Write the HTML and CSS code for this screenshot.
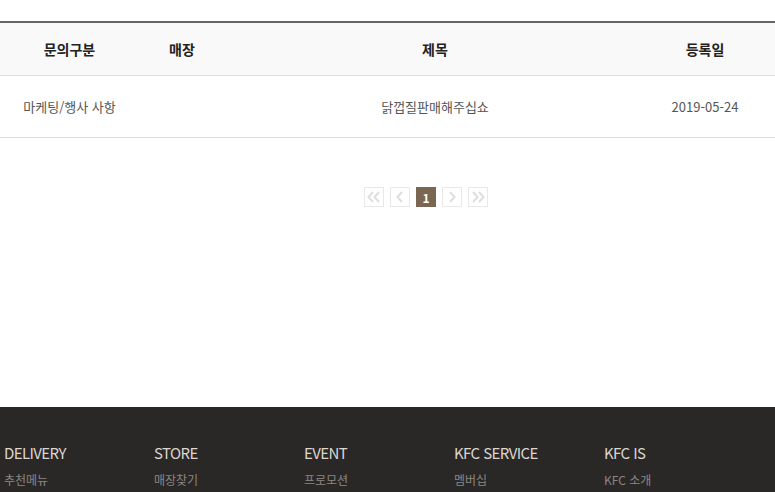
FILE: index.html
```html
<!DOCTYPE html>
<html lang="ko">
<head>
<meta charset="utf-8">
<link rel="stylesheet" href="styles.css">
</head>
<body>
<div class="page">
  <div class="board">
    <div class="row head">
      <div class="c1">문의구분</div>
      <div class="c2">매장</div>
      <div class="c3">제목</div>
      <div class="c4">등록일</div>
    </div>
    <div class="row body">
      <div class="c1">마케팅/행사 사항</div>
      <div class="c2"></div>
      <div class="c3">닭껍질판매해주십쇼</div>
      <div class="c4">2019-05-24</div>
    </div>
  </div>
  <div class="paging">
    <a class="pg"><svg width="14" height="12" viewBox="0 0 14 12"><path d="M6 1 1.5 6 6 11M12 1 7.5 6 12 11" fill="none" stroke="#dedede" stroke-width="2"/></svg></a>
    <a class="pg"><svg width="8" height="12" viewBox="0 0 8 12"><path d="M6 1 1.5 6 6 11" fill="none" stroke="#dedede" stroke-width="2"/></svg></a>
    <a class="pg on">1</a>
    <a class="pg"><svg width="8" height="12" viewBox="0 0 8 12"><path d="M2 1 6.5 6 2 11" fill="none" stroke="#dedede" stroke-width="2"/></svg></a>
    <a class="pg"><svg width="14" height="12" viewBox="0 0 14 12"><path d="M2 1 6.5 6 2 11M8 1 12.5 6 8 11" fill="none" stroke="#dedede" stroke-width="2"/></svg></a>
  </div>
</div>
<footer class="foot">
  <div class="fcol"><h3>DELIVERY</h3><p>추천메뉴</p></div>
  <div class="fcol"><h3>STORE</h3><p>매장찾기</p></div>
  <div class="fcol"><h3>EVENT</h3><p>프로모션</p></div>
  <div class="fcol"><h3>KFC SERVICE</h3><p>멤버십</p></div>
  <div class="fcol"><h3>KFC IS</h3><p>KFC 소개</p></div>
</footer>
</body>
</html>
```
FILE: styles.css
```css
html, body {
  margin: 0;
  padding: 0;
  overflow: hidden;
  background: #fff;
  font-family: "Noto Sans CJK KR", "Noto Sans", sans-serif;
}
.page {
  height: 407px;
  padding-top: 21px;
  box-sizing: border-box;
}
.board {
  border-top: 2px solid #666;
}
.row {
  display: grid;
  grid-template-columns: 139px 86px 420px 120px 1fr;
  align-items: center;
  text-align: center;
}
.head {
  height: 52px;
  background: #f9f9f9;
  border-bottom: 1px solid #ddd;
  font-size: 14px;
  font-weight: 700;
  color: #222;
}
.body {
  height: 61px;
  border-bottom: 1px solid #ddd;
  font-size: 13px;
  color: #555;
}
.paging {
  display: flex;
  justify-content: center;
  gap: 6px;
  margin-top: 49px;
  padding-left: 77px;
}
.pg {
  width: 20px;
  height: 20px;
  box-sizing: border-box;
  border: 1px solid #e8e8e8;
  display: flex;
  align-items: center;
  justify-content: center;
}
.pg.on {
  background: #7b6651;
  border-color: #7b6651;
  color: #fff;
  font-size: 12px;
  font-weight: 700;
}
.foot {
  background: #2a2827;
  height: 85px;
  display: flex;
  padding-left: 4px;
  padding-top: 34px;
  box-sizing: border-box;
}
.fcol {
  width: 150px;
}
.fcol h3 {
  margin: 0;
  font-size: 15px;
  font-weight: 400;
  color: #dcd6cf;
  letter-spacing: -0.6px;
  line-height: 24px;
}
.fcol p {
  margin: 6px 0 0;
  font-size: 12px;
  color: #8a8682;
  line-height: 18px;
}
```
